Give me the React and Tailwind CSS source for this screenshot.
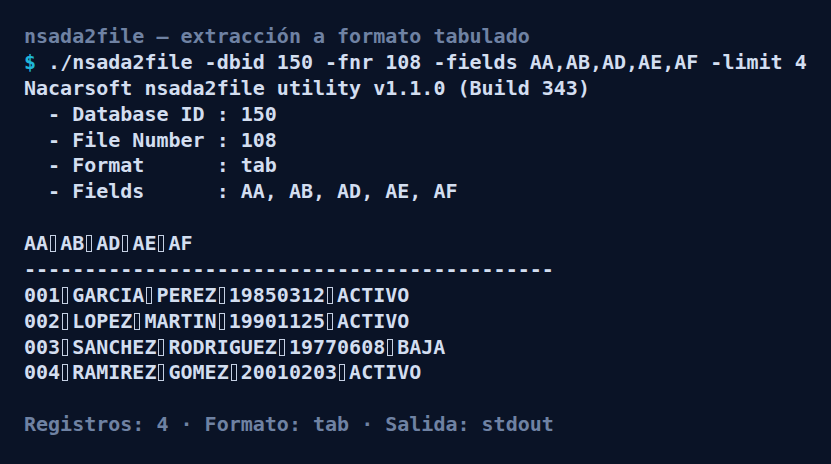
const rows = [
  ["001", "GARCIA", "PEREZ", "19850312", "ACTIVO"],
  ["002", "LOPEZ", "MARTIN", "19901125", "ACTIVO"],
  ["003", "SANCHEZ", "RODRIGUEZ", "19770608", "BAJA"],
  ["004", "RAMIREZ", "GOMEZ", "20010203", "ACTIVO"],
];

// tab separator shows up as a missing-glyph box in the output
const TabBox = () => (
  <span className="inline-block w-[1ch] align-[-2px]">
    <span className="ml-[2px] block h-[17px] w-[6px] border border-[#c5d0e3]" />
  </span>
);

const TabRow = ({ cells }) => (
  <div>
    {cells.map((c, i) => (
      <span key={i}>
        {i > 0 && <TabBox />}
        {c}
      </span>
    ))}
  </div>
);

const App = () => {
  return (
    <div className="h-[464px] w-full overflow-hidden bg-[#0a1326] px-6 pt-6 font-['DejaVu_Sans_Mono',monospace] text-[20px] font-bold leading-[25.87px] text-[#d3def0] whitespace-pre">
      <div className="text-[#6f82a3]">nsada2file — extracción a formato tabulado</div>
      <div>
        <span className="text-[#1fb6d9]">$</span> ./nsada2file -dbid 150 -fnr 108 -fields AA,AB,AD,AE,AF -limit 4
      </div>
      <div>Nacarsoft nsada2file utility v1.1.0 (Build 343)</div>
      <div>  - Database ID : 150</div>
      <div>  - File Number : 108</div>
      <div>  - Format      : tab</div>
      <div>  - Fields      : AA, AB, AD, AE, AF</div>
      <div> </div>
      <TabRow cells={["AA", "AB", "AD", "AE", "AF"]} />
      <div>{"-".repeat(44)}</div>
      {rows.map((r) => (
        <TabRow key={r[0]} cells={r} />
      ))}
      <div> </div>
      <div className="text-[#6f82a3]">Registros: 4 · Formato: tab · Salida: stdout</div>
    </div>
  );
};

export default App;
